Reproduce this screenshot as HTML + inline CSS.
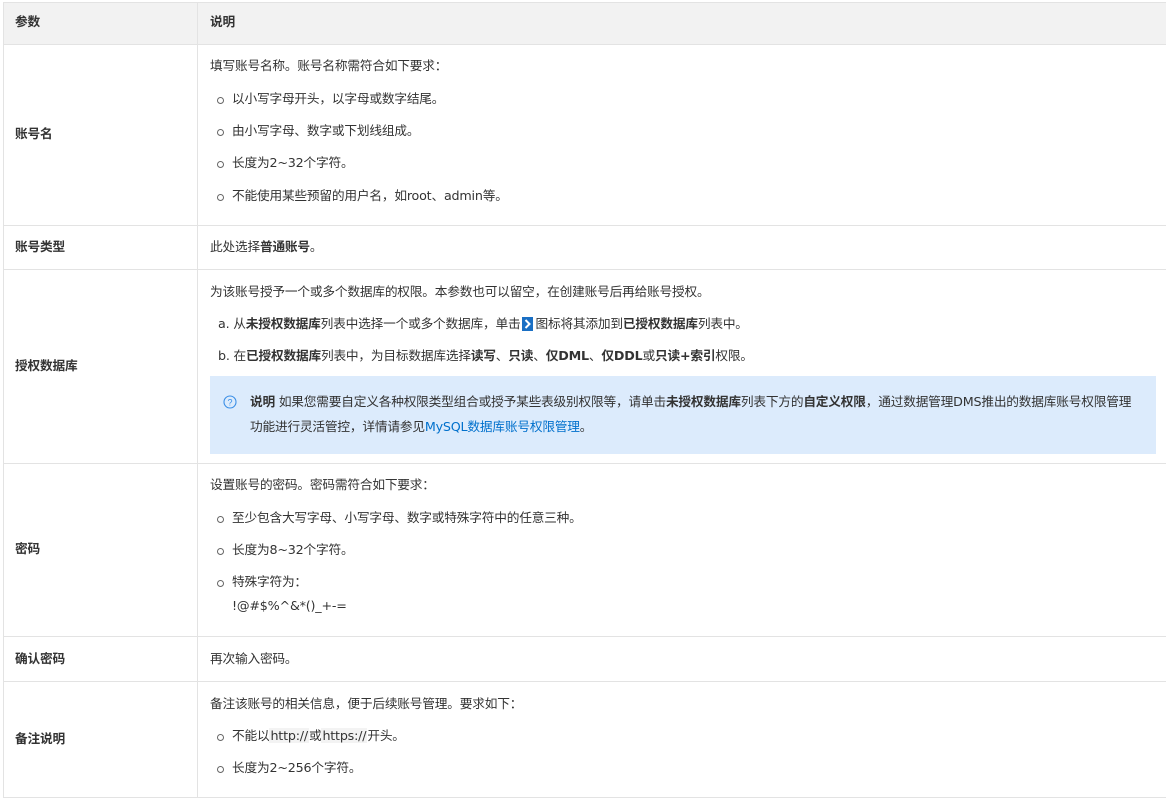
<!DOCTYPE html>
<html><head><meta charset="utf-8"><style>
*{margin:0;padding:0;box-sizing:border-box}
body{width:1176px;height:800px;background:#fff;position:relative;overflow:hidden;font-family:"DejaVu Sans","Noto Sans CJK SC",sans-serif;font-size:12.7px;color:#333}
.hl{position:absolute;left:3px;width:1163px;height:1px;background:#e3e3e3}
.vl{position:absolute;left:197px;width:1px;background:#e3e3e3}
.t{position:absolute;line-height:18px;white-space:nowrap;letter-spacing:-0.2px}
.b{font-weight:bold}
.c1{left:15px;font-weight:bold}
.c2{left:210px}
.li{left:232px}
.li:before{content:"";position:absolute;left:-15px;top:7px;width:5px;height:5px;border:1px solid #666;border-radius:50%}
.ol{left:218px}
a{color:#0070cc;text-decoration:none}
.note{position:absolute;left:210px;top:376px;width:946px;height:78px;background:#dcebfc}
code{font-family:"DejaVu Sans",sans-serif;background:#f3f3f3;padding:0 1px}
</style></head><body>
<div style="position:absolute;left:3px;top:2px;width:1163px;height:42px;background:#f2f2f2"></div>
<div class="hl" style="top:2px"></div>
<div class="hl" style="top:44px"></div>
<div class="hl" style="top:225px"></div>
<div class="hl" style="top:269px"></div>
<div class="hl" style="top:463px"></div>
<div class="hl" style="top:636px"></div>
<div class="hl" style="top:681px"></div>
<div class="hl" style="top:797px"></div>
<div style="position:absolute;left:3px;top:2px;width:1px;height:796px;background:#e3e3e3"></div>
<div class="vl" style="top:2px;height:796px"></div>

<div class="t c1" style="top:13px">参数</div>
<div class="t c2 b" style="top:13px">说明</div>

<div class="t c1" style="top:125px">账号名</div>
<div class="t c2" style="top:57px">填写账号名称。账号名称需符合如下要求：</div>
<div class="t li" style="top:90px">以小写字母开头，以字母或数字结尾。</div>
<div class="t li" style="top:122px">由小写字母、数字或下划线组成。</div>
<div class="t li" style="top:154px">长度为2~32个字符。</div>
<div class="t li" style="top:187px">不能使用某些预留的用户名，如root、admin等。</div>

<div class="t c1" style="top:238px">账号类型</div>
<div class="t c2" style="top:238px">此处选择<b>普通账号</b>。</div>

<div class="t c1" style="top:357px">授权数据库</div>
<div class="t c2" style="top:283px">为该账号授予一个或多个数据库的权限。本参数也可以留空，在创建账号后再给账号授权。</div>
<div class="t ol" style="top:315px">a. 从<b>未授权数据库</b>列表中选择一个或多个数据库，单击<span style="display:inline-block;width:11px;height:14px;background:#1a6fc4;vertical-align:-3px;margin:0 2px;position:relative"><svg width="11" height="14" style="position:absolute;left:0;top:0"><path d="M3.5 3 L7.5 7 L3.5 11" stroke="#fff" stroke-width="2" fill="none"/></svg></span>图标将其添加到<b>已授权数据库</b>列表中。</div>
<div class="t ol" style="top:347px">b. 在<b>已授权数据库</b>列表中，为目标数据库选择<b>读写</b>、<b>只读</b>、<b>仅DML</b>、<b>仅DDL</b>或<b>只读+索引</b>权限。</div>
<div class="note"></div>
<svg style="position:absolute;left:223px;top:395px" width="14" height="14"><circle cx="7" cy="7" r="6" stroke="#3a8ee6" stroke-width="1.1" fill="none"/><text x="7" y="10.5" font-size="9" fill="#3a8ee6" text-anchor="middle" font-family="Liberation Sans">?</text></svg>
<div class="t" style="left:250px;top:393px"><b>说明</b> 如果您需要自定义各种权限类型组合或授予某些表级别权限等，请单击<b>未授权数据库</b>列表下方的<b>自定义权限</b>，通过数据管理DMS推出的数据库账号权限管理</div>
<div class="t" style="left:250px;top:418px">功能进行灵活管控，详情请参见<a>MySQL数据库账号权限管理</a>。</div>

<div class="t c1" style="top:540px">密码</div>
<div class="t c2" style="top:476px">设置账号的密码。密码需符合如下要求：</div>
<div class="t li" style="top:509px">至少包含大写字母、小写字母、数字或特殊字符中的任意三种。</div>
<div class="t li" style="top:541px">长度为8~32个字符。</div>
<div class="t li" style="top:573px">特殊字符为：</div>
<div class="t" style="left:232px;top:597px">!@#$%^&amp;*()_+-=</div>

<div class="t c1" style="top:650px">确认密码</div>
<div class="t c2" style="top:650px">再次输入密码。</div>

<div class="t c1" style="top:730px">备注说明</div>
<div class="t c2" style="top:695px">备注该账号的相关信息，便于后续账号管理。要求如下：</div>
<div class="t li" style="top:727px">不能以<code>http://</code>或<code>https://</code>开头。</div>
<div class="t li" style="top:759px">长度为2~256个字符。</div>
</body></html>
